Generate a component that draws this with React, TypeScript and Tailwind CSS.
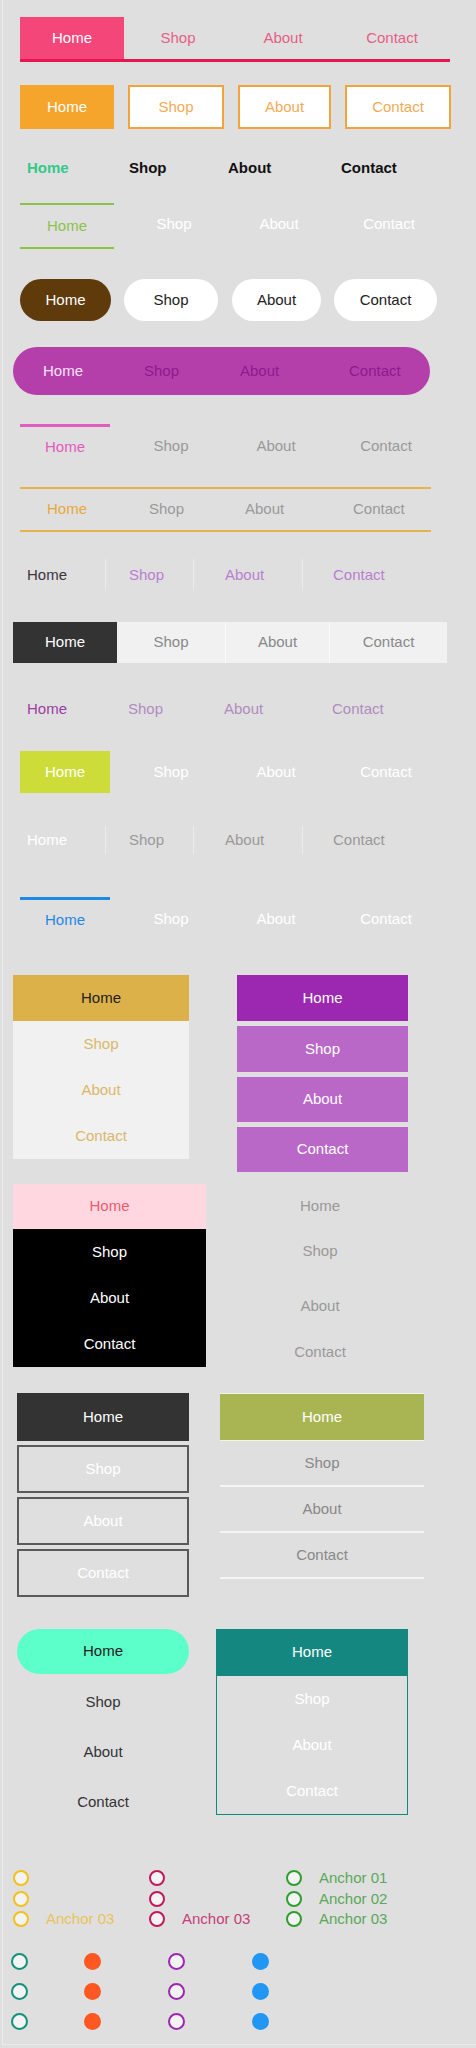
import React from 'react';

const font = "font-['Liberation_Sans',Arial,sans-serif] text-[15px]";

const App = () => {
  return (
    <div className={`h-[2048px] w-[476px] overflow-hidden bg-[#e0dfdf] ${font}`}>
      <div className="ml-[2px] flex h-[2045px] flex-col border-b border-l border-[#ebebeb] pt-[17px]">
        {/* 1. tabs with underline */}
        <div className="ml-[17px] flex w-[430px] border-b-[3px] border-[#e5184e]">
          <a className="flex h-[42px] w-[104px] items-center justify-center bg-[#f54679] text-white">Home</a>
          <a className="flex h-[42px] w-[108px] items-center justify-center text-[#e45f88]">Shop</a>
          <a className="flex h-[42px] w-[102px] items-center justify-center text-[#e45f88]">About</a>
          <a className="flex h-[42px] w-[116px] items-center justify-center text-[#e45f88]">Contact</a>
        </div>

        {/* 2. outlined boxes */}
        <div className="ml-[17px] mt-[23px] flex gap-[14px]">
          <a className="flex h-[44px] w-[94px] items-center justify-center border-2 border-[#f5a42c] bg-[#f5a42c] text-white">Home</a>
          <a className="flex h-[44px] w-[96px] items-center justify-center border-2 border-[#f2a33a] bg-white text-[#f2ab55]">Shop</a>
          <a className="flex h-[44px] w-[93px] items-center justify-center border-2 border-[#f2a33a] bg-white text-[#f2ab55]">About</a>
          <a className="flex h-[44px] w-[106px] items-center justify-center border-2 border-[#f2a33a] bg-white text-[#f2ab55]">Contact</a>
        </div>

        {/* 3. bold links */}
        <div className="ml-[24px] mt-[30px] flex h-[18px] font-bold leading-[18px] text-[#111]">
          <a className="w-[102px] text-[#34c98a]">Home</a>
          <a className="w-[99px]">Shop</a>
          <a className="w-[113px]">About</a>
          <a>Contact</a>
        </div>

        {/* 4. double green line */}
        <div className="ml-[17px] mt-[26px] flex h-[46px] text-white">
          <a className="flex w-[94px] items-center justify-center border-y-2 border-[#8bc34a] text-[#8bc34a]">Home</a>
          <a className="flex w-[120px] items-center justify-center pb-[3px]">Shop</a>
          <a className="flex w-[90px] items-center justify-center pb-[3px]">About</a>
          <a className="flex w-[130px] items-center justify-center pb-[3px]">Contact</a>
        </div>

        {/* 5. pills */}
        <div className="ml-[17px] mt-[30px] flex text-[#222]">
          <a className="flex h-[42px] w-[91px] items-center justify-center rounded-full bg-[#5f3b0c] text-white">Home</a>
          <a className="ml-[13px] flex h-[42px] w-[94px] items-center justify-center rounded-full bg-white">Shop</a>
          <a className="ml-[14px] flex h-[42px] w-[89px] items-center justify-center rounded-full bg-white">About</a>
          <a className="ml-[13px] flex h-[42px] w-[103px] items-center justify-center rounded-full bg-white">Contact</a>
        </div>

        {/* 6. purple bar */}
        <div className="ml-[10px] mt-[26px] flex h-[48px] w-[417px] items-center rounded-full bg-[#b43fab] pl-[30px] text-[#8e1a8f]">
          <a className="w-[101px] text-[#f7e3f5]">Home</a>
          <a className="w-[96px]">Shop</a>
          <a className="w-[109px]">About</a>
          <a>Contact</a>
        </div>

        {/* 7. pink top line */}
        <div className="ml-[17px] mt-[29px] flex h-[43px] text-[#999]">
          <a className="flex w-[90px] items-center justify-center border-t-[3px] border-[#e05cc0] text-[#e35bbd]">Home</a>
          <a className="flex w-[122px] items-center justify-center border-t-[3px] border-transparent pb-[2px]">Shop</a>
          <a className="flex w-[88px] items-center justify-center border-t-[3px] border-transparent pb-[2px]">About</a>
          <a className="flex w-[132px] items-center justify-center border-t-[3px] border-transparent pb-[2px]">Contact</a>
        </div>

        {/* 8. orange lines */}
        <div className="ml-[17px] mt-[20px] flex h-[45px] w-[411px] items-center border-y-2 border-[#e6b24a] pl-[27px] text-[#999]">
          <a className="w-[102px] text-[#e8a93c]">Home</a>
          <a className="w-[96px]">Shop</a>
          <a className="w-[108px]">About</a>
          <a>Contact</a>
        </div>

        {/* 9. separated links */}
        <div className="ml-[24px] mt-[27px] flex h-[32px] text-[#b77fd0]">
          <a className="flex w-[78px] items-center text-[#3c3340]">Home</a>
          <a className="flex w-[88px] items-center border-l border-[#ebebeb] pl-[23px]">Shop</a>
          <a className="flex w-[109px] items-center border-l border-[#ebebeb] pl-[31px]">About</a>
          <a className="flex items-center border-l border-[#ebebeb] pl-[30px]">Contact</a>
        </div>

        {/* 10. segmented */}
        <div className="ml-[10px] mt-[31px] flex h-[41px] text-[#888]">
          <a className="flex w-[104px] items-center justify-center bg-[#333] text-white">Home</a>
          <a className="flex w-[108px] items-center justify-center bg-[#f1f1f1]">Shop</a>
          <a className="flex w-[104px] items-center justify-center border-l border-[#fafafa] bg-[#f1f1f1]">About</a>
          <a className="flex w-[118px] items-center justify-center border-l border-[#fafafa] bg-[#f1f1f1]">Contact</a>
        </div>

        {/* 11. purple text */}
        <div className="ml-[24px] mt-[37px] flex h-[18px] leading-[18px] text-[#b08bc0]">
          <a className="w-[101px] text-[#9c3ca5]">Home</a>
          <a className="w-[96px]">Shop</a>
          <a className="w-[108px]">About</a>
          <a>Contact</a>
        </div>

        {/* 12. lime box */}
        <div className="ml-[17px] mt-[33px] flex h-[42px] text-white">
          <a className="flex w-[90px] items-center justify-center bg-[#cddc39]">Home</a>
          <a className="flex w-[122px] items-center justify-center">Shop</a>
          <a className="flex w-[88px] items-center justify-center">About</a>
          <a className="flex w-[132px] items-center justify-center">Contact</a>
        </div>

        {/* 13. separated grey */}
        <div className="ml-[24px] mt-[33px] flex h-[28px] text-[#999]">
          <a className="flex w-[78px] items-center text-white">Home</a>
          <a className="flex w-[88px] items-center border-l border-[#ebebeb] pl-[23px]">Shop</a>
          <a className="flex w-[109px] items-center border-l border-[#ebebeb] pl-[31px]">About</a>
          <a className="flex items-center border-l border-[#ebebeb] pl-[30px]">Contact</a>
        </div>

        {/* 14. blue top line */}
        <div className="ml-[17px] mt-[43px] flex h-[43px] text-white">
          <a className="flex w-[90px] items-center justify-center border-t-[3px] border-[#1e88e5] text-[#1e88e5]">Home</a>
          <a className="flex w-[122px] items-center justify-center border-t-[3px] border-transparent pb-[2px]">Shop</a>
          <a className="flex w-[88px] items-center justify-center border-t-[3px] border-transparent pb-[2px]">About</a>
          <a className="flex w-[132px] items-center justify-center border-t-[3px] border-transparent pb-[2px]">Contact</a>
        </div>

        {/* vertical menus: row A / B */}
        <div className="ml-[10px] mt-[35px] flex items-start">
          <div className="flex w-[176px] flex-col">
            <a className="flex h-[46px] items-center justify-center bg-[#dcb14a] text-[#222]">Home</a>
            <div className="flex flex-col bg-[#f1f1f1] text-[#d9b86a]">
              <a className="flex h-[46px] items-center justify-center">Shop</a>
              <a className="flex h-[46px] items-center justify-center">About</a>
              <a className="flex h-[46px] items-center justify-center">Contact</a>
            </div>
          </div>
          <div className="ml-[48px] flex w-[171px] flex-col gap-[5px] text-white">
            <a className="flex h-[46px] items-center justify-center bg-[#9c27b0]">Home</a>
            <a className="flex h-[46px] items-center justify-center bg-[#ba68c8]">Shop</a>
            <a className="flex h-[45px] items-center justify-center bg-[#ba68c8]">About</a>
            <a className="flex h-[45px] items-center justify-center bg-[#ba68c8]">Contact</a>
          </div>
        </div>

        {/* row C / D */}
        <div className="ml-[10px] mt-[12px] flex items-start">
          <div className="flex w-[193px] flex-col">
            <a className="flex h-[45px] items-center justify-center bg-[#ffd7e0] text-[#f05a6e]">Home</a>
            <div className="flex flex-col bg-black text-white">
              <a className="flex h-[46px] items-center justify-center">Shop</a>
              <a className="flex h-[46px] items-center justify-center">About</a>
              <a className="flex h-[46px] items-center justify-center">Contact</a>
            </div>
          </div>
          <div className="ml-[31px] flex w-[166px] flex-col text-[#999]">
            <a className="flex h-[45px] items-center justify-center">Home</a>
            <a className="flex h-[44px] items-center justify-center">Shop</a>
            <a className="mt-[10px] flex h-[46px] items-center justify-center">About</a>
            <a className="flex h-[46px] items-center justify-center">Contact</a>
          </div>
        </div>

        {/* row E / F */}
        <div className="ml-[14px] mt-[18px] flex items-start">
          <div className="flex w-[172px] flex-col gap-[4px] text-white">
            <a className="flex h-[48px] items-center justify-center bg-[#333]">Home</a>
            <a className="flex h-[48px] items-center justify-center border-2 border-[#5a5a5a]">Shop</a>
            <a className="flex h-[48px] items-center justify-center border-2 border-[#5a5a5a]">About</a>
            <a className="flex h-[48px] items-center justify-center border-2 border-[#5a5a5a]">Contact</a>
          </div>
          <div className="ml-[31px] flex w-[204px] flex-col text-[#888]">
            <a className="flex h-[48px] items-center justify-center border-y border-[#f4f4e4] bg-[#a9b553] text-white">Home</a>
            <a className="flex h-[46px] items-center justify-center border-b-2 border-[#f5f5f5]">Shop</a>
            <a className="flex h-[46px] items-center justify-center border-b-2 border-[#f5f5f5]">About</a>
            <a className="flex h-[46px] items-center justify-center border-b-2 border-[#f5f5f5]">Contact</a>
          </div>
        </div>

        {/* row G / H */}
        <div className="ml-[14px] mt-[32px] flex items-start">
          <div className="flex w-[172px] flex-col text-[#333]">
            <a className="flex h-[45px] items-center justify-center rounded-full bg-[#5cffca] text-[#222]">Home</a>
            <a className="mt-[3px] flex h-[50px] items-center justify-center">Shop</a>
            <a className="flex h-[50px] items-center justify-center">About</a>
            <a className="flex h-[50px] items-center justify-center">Contact</a>
          </div>
          <div className="ml-[27px] flex w-[192px] flex-col text-white">
            <a className="flex h-[47px] items-center justify-center bg-[#148880]">Home</a>
            <div className="flex flex-col border-x border-b border-[#148880]">
              <a className="flex h-[46px] items-center justify-center">Shop</a>
              <a className="flex h-[46px] items-center justify-center">About</a>
              <a className="flex h-[46px] items-center justify-center">Contact</a>
            </div>
          </div>
        </div>

        {/* radio anchors */}
        <div className="ml-[10px] mt-[41px] flex leading-[20px]">
          <div className="flex w-[136px] flex-col">
            <div className="flex h-[20.5px] items-center"><span className="h-[16px] w-[16px] rounded-full border-2 border-[#f3c01c] bg-[#f3f3f3]" /></div>
            <div className="flex h-[20.5px] items-center"><span className="h-[16px] w-[16px] rounded-full border-2 border-[#f3c01c] bg-[#f3f3f3]" /></div>
            <div className="flex h-[20.5px] items-center gap-[17px]"><span className="h-[16px] w-[16px] rounded-full border-2 border-[#f3c01c] bg-[#f3f3f3]" /><a className="text-[#eac35a]">Anchor 03</a></div>
          </div>
          <div className="flex w-[137px] flex-col">
            <div className="flex h-[20.5px] items-center"><span className="h-[16px] w-[16px] rounded-full border-2 border-[#c2185b] bg-[#f3f3f3]" /></div>
            <div className="flex h-[20.5px] items-center"><span className="h-[16px] w-[16px] rounded-full border-2 border-[#c2185b] bg-[#f3f3f3]" /></div>
            <div className="flex h-[20.5px] items-center gap-[17px]"><span className="h-[16px] w-[16px] rounded-full border-2 border-[#c2185b] bg-[#f3f3f3]" /><a className="text-[#c4407a]">Anchor 03</a></div>
          </div>
          <div className="flex flex-col text-[#5aa85a]">
            <div className="flex h-[20.5px] items-center gap-[17px]"><span className="h-[16px] w-[16px] rounded-full border-2 border-[#2e9e2e] bg-[#f3f3f3]" /><a>Anchor 01</a></div>
            <div className="flex h-[20.5px] items-center gap-[17px]"><span className="h-[16px] w-[16px] rounded-full border-2 border-[#2e9e2e] bg-[#f3f3f3]" /><a>Anchor 02</a></div>
            <div className="flex h-[20.5px] items-center gap-[17px]"><span className="h-[16px] w-[16px] rounded-full border-2 border-[#2e9e2e] bg-[#f3f3f3]" /><a>Anchor 03</a></div>
          </div>
        </div>

        {/* dots */}
        <div className="ml-[7.5px] mt-[17px] flex">
          <div className="flex w-[73px] flex-col">
            {[0, 1, 2].map((i) => (
              <div key={i} className="flex h-[30px] items-center"><span className="h-[17px] w-[17px] rounded-full border-2 border-[#12917b] bg-[#f3f3f3]" /></div>
            ))}
          </div>
          <div className="flex w-[84px] flex-col">
            {[0, 1, 2].map((i) => (
              <div key={i} className="flex h-[30px] items-center"><span className="h-[17px] w-[17px] rounded-full bg-[#ff5722]" /></div>
            ))}
          </div>
          <div className="flex w-[84px] flex-col">
            {[0, 1, 2].map((i) => (
              <div key={i} className="flex h-[30px] items-center"><span className="h-[17px] w-[17px] rounded-full border-2 border-[#9c27b0] bg-[#f3f3f3]" /></div>
            ))}
          </div>
          <div className="flex flex-col">
            {[0, 1, 2].map((i) => (
              <div key={i} className="flex h-[30px] items-center"><span className="h-[17px] w-[17px] rounded-full bg-[#2196f3]" /></div>
            ))}
          </div>
        </div>
      </div>
    </div>
  );
};

export default App;
